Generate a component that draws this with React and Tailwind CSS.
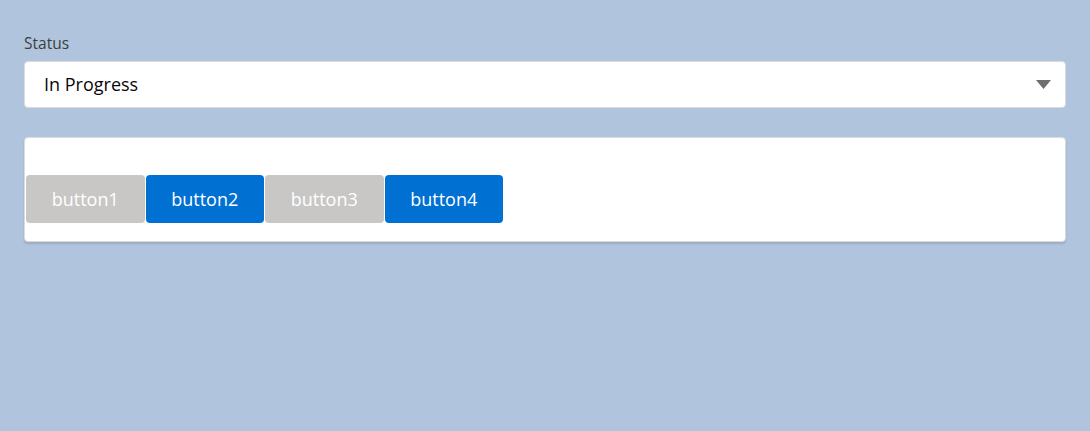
export default function App() {
  const buttons = [
    { label: "button1", on: false },
    { label: "button2", on: true },
    { label: "button3", on: false },
    { label: "button4", on: true },
  ];
  return (
    <div
      className="w-[1090px] h-[431px] bg-[#b0c4de] px-[24px] pt-[32px]"
      style={{ fontFamily: '"Open Sans", "Noto Sans", sans-serif' }}
    >
      <div className="text-[15.5px] leading-[22px] text-[#3e3e3c] mb-[7px]">Status</div>
      <div className="h-[47px] w-[1042px] bg-white border border-[#dddbda] rounded-[4px] flex items-center justify-between pl-[19px] pr-[14px]">
        <span className="text-[18px] text-[#080707]">In Progress</span>
        <svg width="15" height="9" viewBox="0 0 15 9">
          <polygon points="0,0 15,0 7.5,9" fill="#706e6b" />
        </svg>
      </div>
      <div className="mt-[29px] w-[1042px] h-[105px] bg-white border border-[#dddbda] rounded-[4px] shadow-[0_2px_2px_rgba(0,0,0,0.12)] pt-[37px] px-[1px]">
        <div className="flex gap-[1px]">
          {buttons.map((b) => (
            <div
              key={b.label}
              className={
                "w-[118.5px] h-[48px] rounded-[4px] flex items-center justify-center text-white text-[18px] " +
                (b.on ? "bg-[#0070d2]" : "bg-[#c9c7c5]")
              }
            >
              {b.label}
            </div>
          ))}
        </div>
      </div>
    </div>
  );
}
